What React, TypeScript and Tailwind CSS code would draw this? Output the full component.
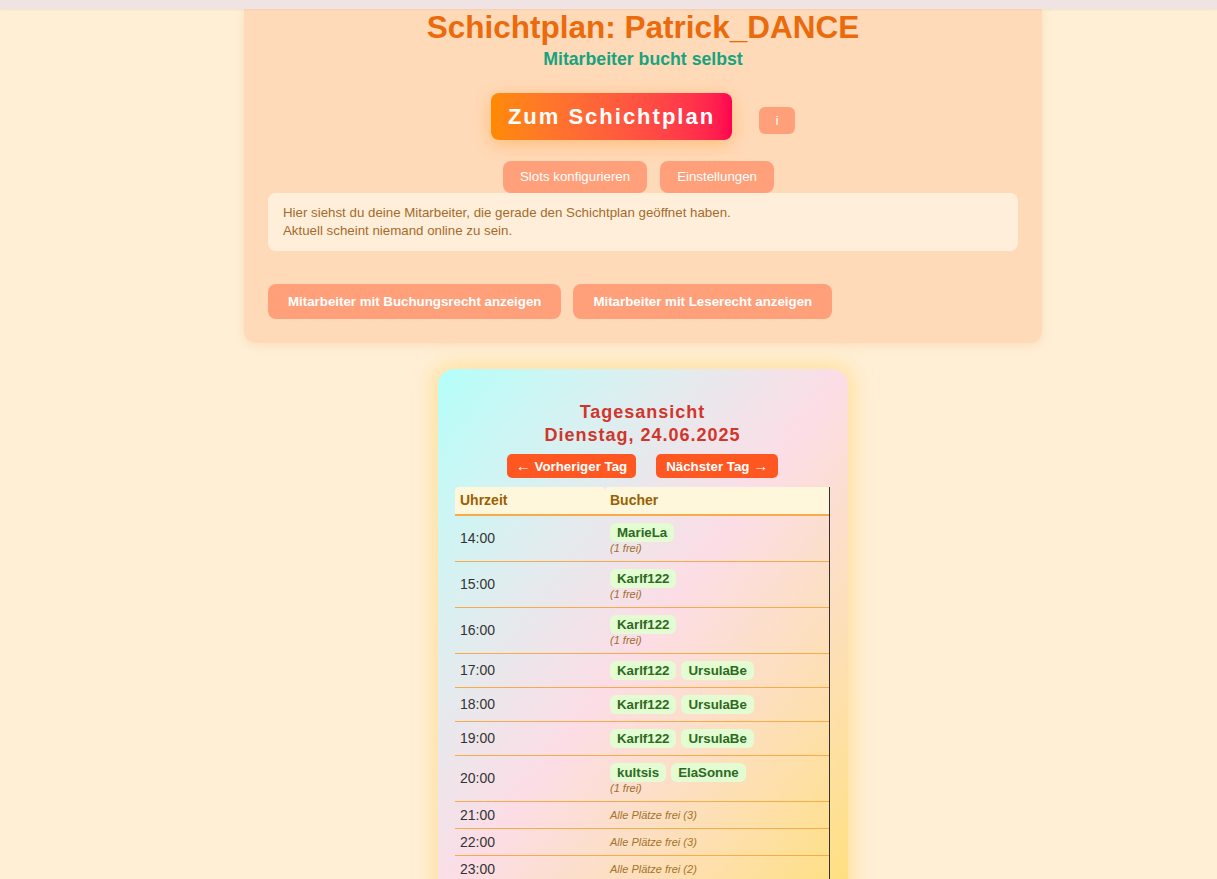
import React from 'react';

type Slot = {
  time: string;
  names: string[];
  free?: string;
  allFree?: string;
};

const slots: Slot[] = [
  { time: '14:00', names: ['MarieLa'], free: '(1 frei)' },
  { time: '15:00', names: ['Karlf122'], free: '(1 frei)' },
  { time: '16:00', names: ['Karlf122'], free: '(1 frei)' },
  { time: '17:00', names: ['Karlf122', 'UrsulaBe'] },
  { time: '18:00', names: ['Karlf122', 'UrsulaBe'] },
  { time: '19:00', names: ['Karlf122', 'UrsulaBe'] },
  { time: '20:00', names: ['kultsis', 'ElaSonne'], free: '(1 frei)' },
  { time: '21:00', names: [], allFree: 'Alle Plätze frei (3)' },
  { time: '22:00', names: [], allFree: 'Alle Plätze frei (3)' },
  { time: '23:00', names: [], allFree: 'Alle Plätze frei (2)' },
];

export default function App() {
  return (
    <div className="min-h-screen bg-[#ffefd5] font-['Liberation_Sans',Arial,sans-serif]">
      {/* Browser-Leiste oben */}
      <div className="h-[9px] bg-[#f0e3e3] shadow-[0_1px_2px_rgba(0,0,0,0.06)] relative z-10" />

      <div className="pl-[69px]">
        <div className="mx-auto w-[798px]">
          {/* Kopfbereich */}
          <div className="bg-[#ffdab9] rounded-b-xl shadow-[0_2px_10px_rgba(230,170,110,0.25)] px-6 pb-6">
            <h1 className="text-center text-[31.5px] leading-[37px] font-bold text-[#ea6a0c]">
              Schichtplan: Patrick_DANCE
            </h1>
            <div className="text-center text-[17.7px] leading-[20px] font-bold text-[#17a37e] mt-[3px]">
              Mitarbeiter bucht selbst
            </div>

            <div className="flex justify-center items-center gap-[27px] mt-[24px]">
              <button className="h-[47px] px-[17px] rounded-lg bg-gradient-to-r from-[#ff8a00] to-[#ff0050] text-white text-[22px] font-bold tracking-[2px] shadow-[0_4px_18px_rgba(255,150,40,0.45)]">
                Zum Schichtplan
              </button>
              <button className="mt-[8px] h-[27px] w-[36px] rounded-md bg-[#ffa07a] text-white text-[12px]">
                i
              </button>
            </div>

            <div className="flex justify-center gap-[13px] mt-[21px] pr-[9px]">
              <button className="h-[32px] px-[17px] rounded-lg bg-[#ffa07a] text-white text-[13.3px]">
                Slots konfigurieren
              </button>
              <button className="h-[32px] px-[17px] rounded-lg bg-[#ffa07a] text-white text-[13.3px]">
                Einstellungen
              </button>
            </div>

            <div className="bg-[#ffefda] rounded-lg px-[15px] py-[11px] text-[13.3px] leading-[18px] text-[#a46b2c]">
              <p>Hier siehst du deine Mitarbeiter, die gerade den Schichtplan geöffnet haben.</p>
              <p>Aktuell scheint niemand online zu sein.</p>
            </div>

            <div className="flex gap-3 mt-[33px]">
              <button className="h-[35px] px-[20px] rounded-lg bg-[#ffa07a] text-white text-[13.3px] font-bold">
                Mitarbeiter mit Buchungsrecht anzeigen
              </button>
              <button className="h-[35px] px-[20px] rounded-lg bg-[#ffa07a] text-white text-[13.3px] font-bold">
                Mitarbeiter mit Leserecht anzeigen
              </button>
            </div>
          </div>

          {/* Tagesansicht */}
          <div className="mx-auto mt-[26px] w-[410px] rounded-2xl bg-gradient-to-br from-[#b3fffa] via-[#fcdde6] to-[#ffe07a] shadow-[0_0_18px_6px_rgba(255,215,120,0.55)] pt-[32px] pl-[17px] pr-[18px] pb-6">
            <div className="text-center text-[18px] leading-[23px] font-bold tracking-[1px] text-[#d2352b]">
              <div>Tagesansicht</div>
              <div>Dienstag, 24.06.2025</div>
            </div>

            <div className="flex justify-center gap-5 mt-[7px]">
              <button className="h-6 px-[9px] rounded-[5px] bg-[#ff5722] text-white text-[13.3px] font-bold">
                <span className="text-[15px]">←</span> Vorheriger Tag
              </button>
              <button className="h-6 px-[10px] rounded-[5px] bg-[#ff5722] text-white text-[13.3px] font-bold">
                Nächster Tag <span className="text-[15px]">→</span>
              </button>
            </div>

            <div className="mt-[9px] border-r border-[#333]">
              <div className="flex border-b-2 border-[#fbaa48]">
                <div className="w-[150px] h-[27px] flex items-center px-[5px] bg-[#fff7dc] rounded-t-[4px] text-[14px] font-bold text-[#9a5f00]">
                  Uhrzeit
                </div>
                <div className="flex-1 h-[27px] flex items-center px-[5px] bg-[#fff7dc] rounded-tl-[4px] text-[14px] font-bold text-[#9a5f00]">
                  Bucher
                </div>
              </div>

              {slots.map((s) => (
                <div key={s.time} className="flex border-b border-[#fbaa48]">
                  <div className="w-[150px] px-[5px] flex items-center text-[14px] text-[#333]">
                    {s.time}
                  </div>
                  <div className="flex-1 px-[5px] py-[7px]">
                    {s.names.length > 0 && (
                      <div className="flex gap-[5px]">
                        {s.names.map((n, i) => (
                          <span
                            key={i}
                            className="h-[19px] px-[7px] flex items-center rounded-md bg-[#e3fcd2] text-[13.3px] font-bold text-[#2d6a1f]"
                          >
                            {n}
                          </span>
                        ))}
                      </div>
                    )}
                    {s.free && (
                      <div className="text-[11px] leading-[12px] italic text-[#a06c2a]">{s.free}</div>
                    )}
                    {s.allFree && (
                      <div className="text-[11px] leading-[12px] italic text-[#a6732a]">{s.allFree}</div>
                    )}
                  </div>
                </div>
              ))}
            </div>
          </div>
        </div>
      </div>
    </div>
  );
}
